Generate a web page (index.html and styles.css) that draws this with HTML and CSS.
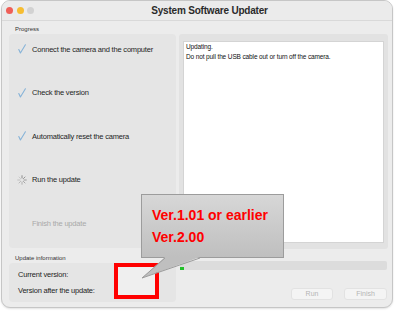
FILE: index.html
```html
<!DOCTYPE html>
<html>
<head>
<meta charset="utf-8">
<link rel="stylesheet" href="styles.css">
</head>
<body>
<div class="window">
  <div class="titlebar">
    <div class="lights">
      <span class="light red"></span>
      <span class="light yellow"></span>
      <span class="light off"></span>
    </div>
    <div class="title">System Software Updater</div>
  </div>
  <div class="content">
    <div class="label label-progress">Progress</div>
    <div></div>
    <div class="steps">
      <div class="step"><span class="icon"><svg width="8" height="10" viewBox="0 0 8 10"><path d="M0.8 5.6 L2.4 9 L7.4 0.8" fill="none" stroke="#86b3d8" stroke-width="1.1" stroke-linecap="round" stroke-linejoin="round"/></svg></span><span>Connect the camera and the computer</span></div>
      <div class="step"><span class="icon"><svg width="8" height="10" viewBox="0 0 8 10"><path d="M0.8 5.6 L2.4 9 L7.4 0.8" fill="none" stroke="#86b3d8" stroke-width="1.1" stroke-linecap="round" stroke-linejoin="round"/></svg></span><span>Check the version</span></div>
      <div class="step"><span class="icon"><svg width="8" height="10" viewBox="0 0 8 10"><path d="M0.8 5.6 L2.4 9 L7.4 0.8" fill="none" stroke="#86b3d8" stroke-width="1.1" stroke-linecap="round" stroke-linejoin="round"/></svg></span><span>Automatically reset the camera</span></div>
      <div class="step"><span class="icon"><svg class="spinner" width="10" height="10" viewBox="-5 -5 10 10">
        <g stroke="#8c8c8c" stroke-width="1" stroke-linecap="round">
          <line x1="0" y1="-2" x2="0" y2="-4.3" opacity="1"/>
          <line x1="1.4" y1="-1.4" x2="3" y2="-3" opacity="0.9"/>
          <line x1="2" y1="0" x2="4.3" y2="0" opacity="0.8"/>
          <line x1="1.4" y1="1.4" x2="3" y2="3" opacity="0.7"/>
          <line x1="0" y1="2" x2="0" y2="4.3" opacity="0.6"/>
          <line x1="-1.4" y1="1.4" x2="-3" y2="3" opacity="0.5"/>
          <line x1="-2" y1="0" x2="-4.3" y2="0" opacity="0.4"/>
          <line x1="-1.4" y1="-1.4" x2="-3" y2="-3" opacity="0.3"/>
        </g></svg></span><span>Run the update</span></div>
      <div class="step step-pending"><span class="icon"></span><span>Finish the update</span></div>
    </div>
    <div class="log">
      <div class="log-box">Updating.<br>Do not pull the USB cable out or turn off the camera.</div>
    </div>
    <div class="info-col">
      <div class="label label-info">Update information</div>
      <div class="info-box">
        <div>Current version:</div>
        <div>Version after the update:</div>
      </div>
    </div>
    <div class="action-col">
      <div class="bar"><div class="bar-fill"></div></div>
      <div class="buttons">
        <button class="btn btn-run">Run</button>
        <button class="btn btn-finish">Finish</button>
      </div>
    </div>
  </div>
</div>
<div class="mark-box"></div>
<div class="callout">
  <div class="callout-text">Ver.1.01 or earlier<br>Ver.2.00</div>
  <svg class="callout-tail" width="62" height="23" viewBox="0 0 62 23">
    <polygon points="24,0 59,0 1,21" fill="#bfbfbf"/>
    <polyline points="24,1 1,21 59,1" fill="none" stroke="#9c9c9c" stroke-width="1"/>
  </svg>
</div>
</body>
</html>
```
FILE: styles.css
```css
* { box-sizing: border-box; }
html, body { margin: 0; padding: 0; }
body {
  background: #ffffff;
  width: 395px;
  height: 313px;
  position: relative;
  overflow: hidden;
  font-family: "Liberation Sans", Arial, sans-serif;
  color: #1e1e1e;
}
.window {
  margin-left: 1px;
  width: 392px;
  height: 308px;
  background: #ececec;
  border: 1px solid #c6c6c6;
  border-radius: 9px;
  overflow: hidden;
  box-shadow: 0 1px 2px rgba(0,0,0,0.12);
}
.titlebar {
  height: 20px;
  display: flex;
  align-items: center;
  border-bottom: 1px solid #d9d9d9;
  background: #ebebeb;
  padding-left: 4px;
}
.lights { display: flex; gap: 3.5px; }
.light { width: 7px; height: 7px; border-radius: 50%; display: block; }
.red { background: #ef5f58; }
.yellow { background: #f6bd31; }
.off { background: #d2d2d2; }
.title {
  flex: 1;
  text-align: center;
  padding-right: 7px;
  font-size: 10px;
  font-weight: bold;
  letter-spacing: -0.2px;
  color: #2a2a2a;
}
.content {
  display: grid;
  grid-template-columns: 167px 209px;
  column-gap: 3px;
  padding-left: 7px;
  align-items: start;
}
.label {
  font-size: 6px;
  line-height: 8px;
  color: #333;
  padding-left: 6px;
}
.label-progress { height: 13px; padding-top: 4px; }
.steps {
  height: 214px;
  background: #e5e5e5;
  border-radius: 4px;
  padding: 9px 0 0 9px;
  display: flex;
  flex-direction: column;
  gap: 31.5px;
}
.step {
  height: 12px;
  display: flex;
  align-items: center;
  font-size: 7.5px;
  letter-spacing: -0.2px;
  color: #1e1e1e;
}
.icon {
  width: 14px;
  height: 12px;
  display: flex;
  align-items: center;
}
.spinner { margin-left: -1px; }
.step-pending { color: #a9a9a9; }
.log {
  height: 215px;
  background: #e2e2e2;
  border-radius: 3px;
  padding: 7px 4px 6px 4px;
}
.log-box {
  height: 202px;
  background: #ffffff;
  border: 1px solid #d4d4d4;
  padding: 0 2px;
  font-size: 6.5px;
  line-height: 9.5px;
  letter-spacing: -0.12px;
  color: #111;
}
.label-info { height: 14px; padding-top: 5px; }
.info-box {
  height: 39px;
  background: #e5e5e5;
  border-radius: 4px;
  padding: 8px 0 0 9px;
  display: flex;
  flex-direction: column;
  gap: 8px;
  font-size: 7.5px;
  line-height: 8px;
  letter-spacing: -0.2px;
}
.action-col { padding: 12px 1px 0 1px; }
.bar {
  height: 9px;
  background: #dcdcdc;
  border-radius: 2px;
  display: flex;
  align-items: flex-end;
}
.bar-fill {
  width: 4px;
  height: 3px;
  background: #22c02a;
}
.buttons {
  margin-top: 18px;
  display: flex;
  justify-content: flex-end;
  gap: 11px;
}
.btn {
  height: 12px;
  padding: 0;
  margin: 0;
  border: 1px solid #e2e2e2;
  border-radius: 3px;
  background: #f4f4f4;
  color: #b4b4b4;
  font-family: "Liberation Sans", Arial, sans-serif;
  font-size: 7px;
  line-height: 10px;
}
.btn-run { width: 42px; }
.btn-finish { width: 43px; }
.mark-box {
  position: absolute;
  left: 114px;
  top: 263px;
  width: 45px;
  height: 36px;
  border: 4px solid #ff0000;
  background: #efefef;
}
.callout {
  position: absolute;
  left: 141px;
  top: 194px;
  width: 143px;
  height: 64px;
  border: 1px solid #9c9c9c;
  background: linear-gradient(#d7d7d7, #bfbfbf);
  padding: 9px 0 0 10px;
}
.callout-text {
  font-family: "Liberation Sans", Arial, sans-serif;
  font-weight: bold;
  font-size: 14px;
  line-height: 22px;
  color: #ff0000;
}
.callout-tail {
  position: absolute;
  left: -1px;
  top: 62px;
}
```
